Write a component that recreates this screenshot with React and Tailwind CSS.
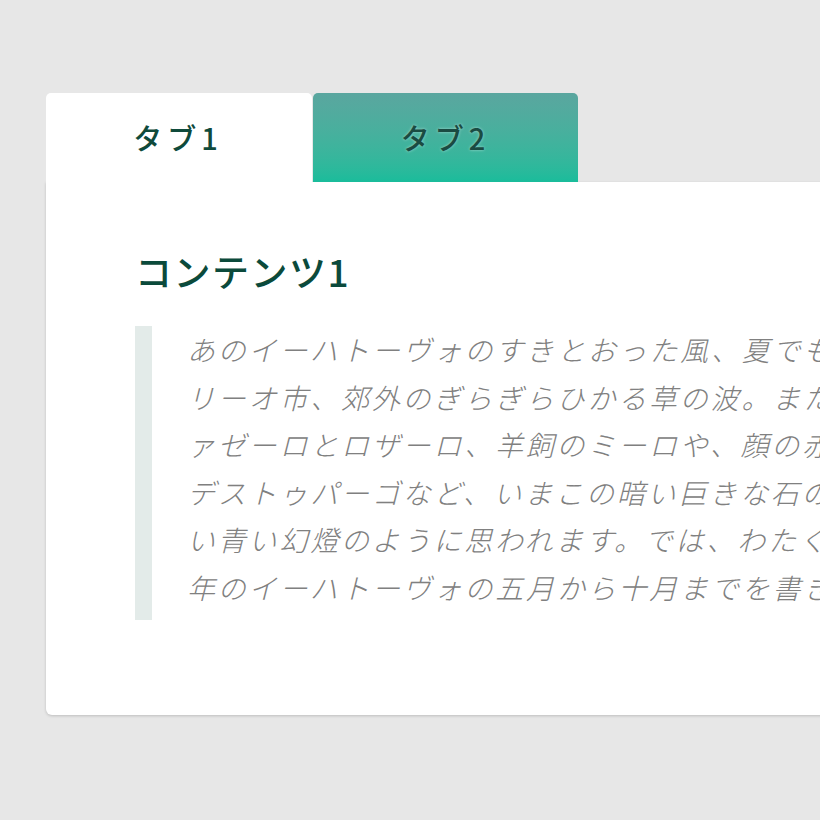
import React, { useState } from "react";

const lines = [
  "あのイーハトーヴォのすきとおった風、夏でも底に冷たさをもつ青いそら、うつくしい森で飾られたモ",
  "リーオ市、郊外のぎらぎらひかる草の波。またそのなかでいっしょになったたくさんのひとたち、フ",
  "ァゼーロとロザーロ、羊飼のミーロや、顔の赤いこどもたち、地主のテーモ、山猫博士のボーガント・",
  "デストゥパーゴなど、いまこの暗い巨きな石の建物のなかで考えていると、みんなむかし風のなつかし",
  "い青い幻燈のように思われます。では、わたくしはいつかの小さなみだしをつけながら、しずかにあの",
  "年のイーハトーヴォの五月から十月までを書きつけましょう。",
];

const App = () => {
  const [tab, setTab] = useState(1);

  return (
    <div className="w-full min-h-screen overflow-hidden bg-[#e7e7e7] pt-[93px] pl-[46px] font-['Noto_Sans_CJK_JP',sans-serif]">
      <div className="w-[1000px]">
        {/* Tabs */}
        <div className="flex">
          <button
            onClick={() => setTab(1)}
            className="w-[266px] h-[89px] bg-white rounded-t-[5px] text-[29px] font-medium tracking-[5px] text-[#0f4a3b] pr-[2px]"
          >
            タブ1
          </button>
          <button
            onClick={() => setTab(2)}
            className="ml-px w-[265px] h-[89px] rounded-t-[5px] bg-gradient-to-b from-[#5aa69f] to-[#19bc9b] text-[29px] font-medium tracking-[5px] text-[#1a4b42] [text-shadow:0_0_3px_rgba(255,255,255,0.5)]"
          >
            タブ2
          </button>
        </div>
        {/* Content */}
        <div className="bg-white rounded-b-[6px] shadow-[0_1px_3px_rgba(0,0,0,0.18)] pl-[89px] pt-[64px] pb-[95px]">
          <h2 className="text-[37px] leading-[51px] font-medium tracking-[1.5px] text-[#0b4a3b]">
            コンテンツ{tab}
          </h2>
          <blockquote className="mt-[29px] border-l-[17px] border-[#e3ebe9] pl-[35px] pt-[2px] pb-[6px] font-['Liberation_Serif','Noto_Sans_CJK_JP',serif] italic font-light text-[28px] leading-[47.6px] tracking-[2.8px] text-[#808080]">
            {lines.map((l, i) => (
              <p key={i} className="whitespace-nowrap">
                {l}
              </p>
            ))}
          </blockquote>
        </div>
      </div>
    </div>
  );
};

export default App;
